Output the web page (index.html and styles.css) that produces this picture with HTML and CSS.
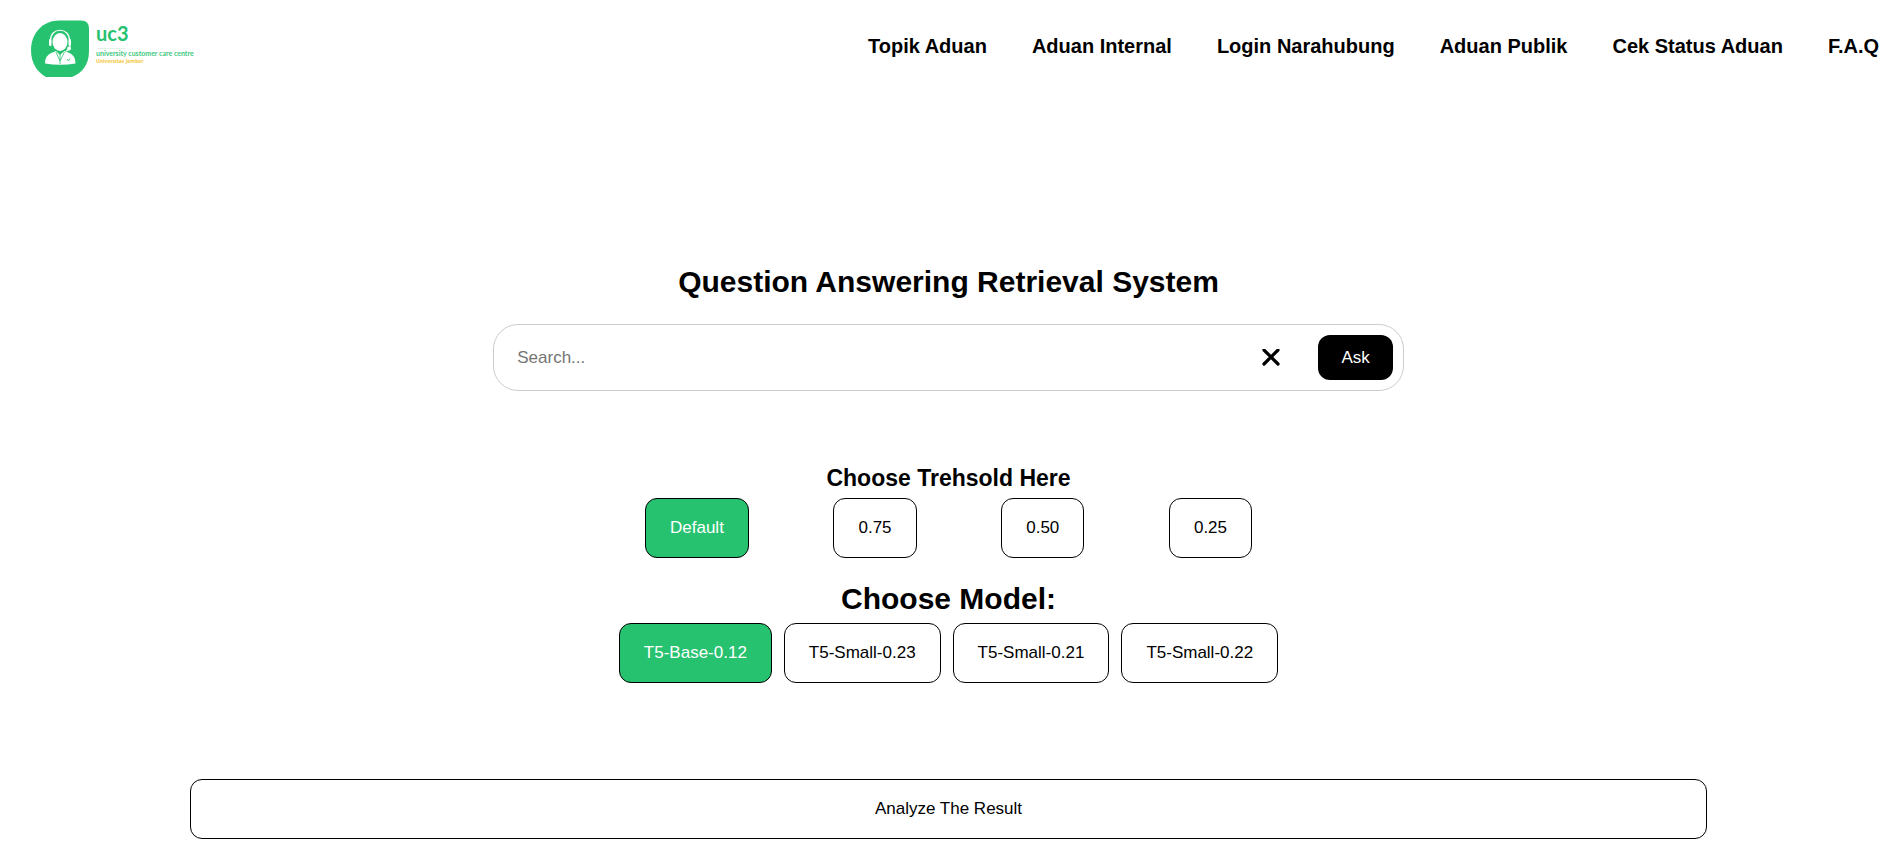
FILE: index.html
```html
<!DOCTYPE html>
<html lang="id">
<head>
<meta charset="utf-8">
<meta name="viewport" content="width=device-width, initial-scale=1">
<title>Question Answering Retrieval System</title>
<link rel="stylesheet" href="styles.css">
</head>
<body>
<header class="header">
  <a class="logo" href="#" aria-label="UC3 home">
    <svg width="170" height="60" viewBox="0 0 170 60">
      <path fill="#27c270" d="M29 .5H51Q59 .5 59 8.500V31C59 45 52 53 42 57H16C7 52 1 43 1 30C1 13 13 .5 29 .5Z"/>
      <path fill="#fff" d="M15 43.500C15 35 20 33.500 26 31L30 35L34.500 31C41 33.500 45.500 35 45.500 43.500Q30 46 15 43.500Z"/>
      <ellipse cx="30" cy="22" rx="7.500" ry="9" fill="#fff"/>
      <path fill="none" stroke="#fff" stroke-width="1.200" d="M20.500 20C20.500 7 39.500 7 39.500 20M40 26Q40 30 36 31"/>
      <rect x="19" y="19" width="2.500" height="7" rx="1.200" fill="#fff"/>
      <rect x="38.500" y="19" width="2.500" height="7" rx="1.200" fill="#fff"/>
      <circle cx="39" cy="28.500" r="2" fill="#fff"/>
      <path fill="none" stroke="#27c270" stroke-width=".8" d="M26 32L30 41L34.500 32M30 34V44M37 39L38.500 41L40 38.500"/>
      <path stroke="#e4f1ea" d="M67 28.500H95"/>
      <text class="logo-name" x="66" y="21">uc3</text>
      <text class="logo-tag" x="66" y="36">university customer care centre</text>
      <text class="logo-sub" x="66" y="43">Universitas Jember</text>
    </svg>
  </a>
  <nav class="nav">
    <a href="#">Topik Aduan</a>
    <a href="#">Aduan Internal</a>
    <a href="#">Login Narahubung</a>
    <a href="#">Aduan Publik</a>
    <a href="#">Cek Status Aduan</a>
    <a href="#">F.A.Q</a>
  </nav>
</header>
<main class="main">
  <h1 class="title">Question Answering Retrieval System</h1>
  <form class="search">
    <input class="search-input" type="text" placeholder="Search..." aria-label="Search">
    <button class="clear" type="reset" aria-label="Clear">
      <svg width="18" height="18" viewBox="0 0 18 18"><path d="M2 1L16 15M16 1L2 15" stroke="#000" stroke-width="3.200" stroke-linecap="round"/></svg>
    </button>
    <button class="ask" type="button">Ask</button>
  </form>
  <section class="thresholds">
    <h2 class="subtitle">Choose Trehsold Here</h2>
    <div class="threshold-row">
      <button class="option selected" type="button">Default</button>
      <button class="option" type="button">0.75</button>
      <button class="option" type="button">0.50</button>
      <button class="option" type="button">0.25</button>
    </div>
  </section>
  <section class="models">
    <h2 class="title">Choose Model:</h2>
    <div class="model-row">
      <button class="option selected" type="button">T5-Base-0.12</button>
      <button class="option" type="button">T5-Small-0.23</button>
      <button class="option" type="button">T5-Small-0.21</button>
      <button class="option" type="button">T5-Small-0.22</button>
    </div>
  </section>
  <button class="option analyze" type="button">Analyze The Result</button>
</main>
</body>
</html>
```
FILE: styles.css
```css
* {
  box-sizing: border-box;
}

body {
  margin: 0;
  background: #fff;
  color: #000;
  font-family: "Liberation Sans", Arial, sans-serif;
  font-size: 17px;
}

button,
input {
  font: inherit;
}

.header {
  display: flex;
  justify-content: space-between;
  align-items: flex-start;
  padding: 20px 18px 0 30px;
}

.logo svg {
  display: block;
}

.logo-name {
  fill: #27c270;
  font: bold 20px Lato, sans-serif;
}

.logo-tag {
  fill: #3fc980;
  font: bold 7px Lato, sans-serif;
}

.logo-sub {
  fill: #f3c73c;
  font: bold 5px "Open Sans", sans-serif;
}

.nav {
  display: flex;
  gap: 45px;
  padding-top: 14px;
}

.nav a {
  color: #000;
  font-size: 20px;
  font-weight: bold;
  line-height: 24px;
  text-decoration: none;
}

.main {
  display: flex;
  flex-direction: column;
  align-items: center;
  padding: 184px 0 24px;
}

.title,
.subtitle {
  margin: 0;
  text-align: center;
}

.title {
  font-size: 30px;
  line-height: 36px;
}

.subtitle {
  font-size: 23px;
  line-height: 28px;
}

.search {
  display: flex;
  align-items: center;
  width: 48%;
  margin-top: 24px;
  padding: 10px;
  border: 1px solid #ccc;
  border-radius: 25px;
}

.search-input {
  flex: 1;
  min-width: 0;
  padding: 0 13px;
  border: 0;
  outline: 0;
  background: none;
}

.search-input::placeholder {
  color: #757575;
}

.clear {
  display: flex;
  margin-right: 32px;
  padding: 6px;
  border: 0;
  background: none;
}

.ask {
  padding: 0 23px;
  border: 0;
  border-radius: 12px;
  background: #000;
  color: #fff;
  line-height: 45px;
}

.thresholds {
  width: 32%;
  margin-top: 73px;
}

.threshold-row {
  display: flex;
  justify-content: space-between;
  margin-top: 6px;
}

.models {
  margin-top: 23px;
}

.model-row {
  display: flex;
  gap: 12px;
  margin-top: 6px;
}

.option {
  padding: 19px 24px;
  border: 1px solid #000;
  border-radius: 12px;
  background: #fff;
  color: #000;
  line-height: 20px;
}

.selected {
  background: #27c270;
  color: #fff;
}

.analyze {
  width: 80%;
  margin-top: 96px;
}
```
